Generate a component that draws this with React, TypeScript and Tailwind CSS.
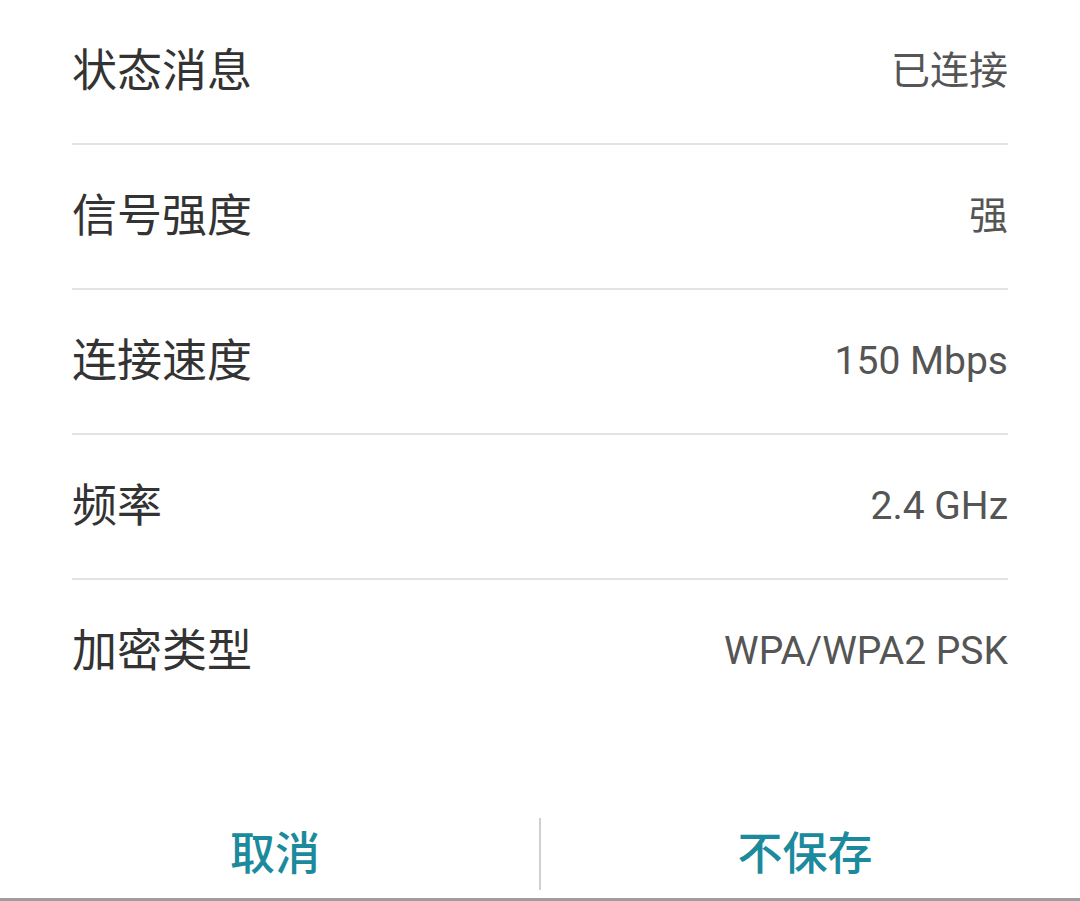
const ROWS = [
  { label: "状态消息", value: "已连接" },
  { label: "信号强度", value: "强" },
  { label: "连接速度", value: "150 Mbps" },
  { label: "频率", value: "2.4 GHz" },
  { label: "加密类型", value: "WPA/WPA2 PSK" },
];

export default function App() {
  return (
    <div
      className="w-[1080px] h-[901px] bg-white flex flex-col overflow-hidden"
      style={{ fontFamily: "Roboto, 'Noto Sans CJK SC', sans-serif" }}
    >
      <section className="px-[72px] flex flex-col">
        {ROWS.map((row, i) => (
          <div
            key={row.label}
            className={
              i < ROWS.length - 1
                ? "h-[145px] flex items-center justify-between border-b-2 border-[#e3e3e3]"
                : "h-[143px] flex items-center justify-between"
            }
          >
            <span className="text-[45px] leading-none text-[#333333]">
              {row.label}
            </span>
            <span className="text-[39px] leading-none text-[#555555]">
              {row.value}
            </span>
          </div>
        ))}
      </section>

      <div className="h-[87px]" />

      <footer className="h-[88px] px-[11px] flex items-stretch">
        <button className="flex-1 flex items-center justify-center text-[45px] leading-none font-medium text-[#1b8a9c]">
          取消
        </button>
        <div className="w-[2px] my-2 bg-[#d0d0d0]" />
        <button className="flex-1 flex items-center justify-center text-[45px] leading-none font-medium text-[#1b8a9c]">
          不保存
        </button>
      </footer>
      <div className="h-[3px] bg-[#9e9e9e]" />
    </div>
  );
}
